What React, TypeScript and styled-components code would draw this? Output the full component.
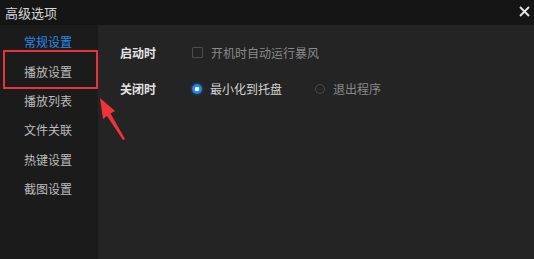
import React from "react";
import styled, { createGlobalStyle } from "styled-components";

const Global = createGlobalStyle`
  html, body { margin: 0; padding: 0; background: #242424; }
  body { font-family: "Noto Sans CJK SC", "Noto Sans", sans-serif; }
  #root { width: 534px; height: 259px; }
`;

const Window = styled.div`
  position: relative;
  width: 534px;
  height: 259px;
  display: flex;
  flex-direction: column;
  background: #242424;
  overflow: hidden;
`;

const TitleBar = styled.div`
  height: 25px;
  flex: none;
  display: flex;
  align-items: center;
  justify-content: space-between;
  padding: 0 4px 0 5px;
  background: #151515;
`;

const Title = styled.span`
  font-size: 13px;
  color: #d6d6d6;
  line-height: 1;
  margin-top: -1px;
`;

const Close = styled.svg`
  width: 11px;
  height: 11px;
  margin-top: -2px;
`;

const Body = styled.div`
  flex: 1;
  display: flex;
`;

const Sidebar = styled.div`
  width: 98px;
  flex: none;
  background: #1b1b1b;
  padding-top: 2px;
  display: flex;
  flex-direction: column;
`;

const NavItem = styled.div<{ $active?: boolean }>`
  height: 29.4px;
  display: flex;
  align-items: center;
  padding-left: 24px;
  font-size: 12px;
  color: ${(p) => (p.$active ? "#2a8ae8" : "#bdbdbd")};
`;

const Content = styled.div`
  flex: 1;
  padding: 19px 0 0 22px;
  display: flex;
  flex-direction: column;
  gap: 19px;
`;

const Row = styled.div`
  display: flex;
  align-items: center;
  height: 17px;
`;

const Label = styled.span`
  width: 72px;
  font-size: 12px;
  color: #e2e2e2;
  font-weight: 600;
`;

const Option = styled.label<{ $dim?: boolean; $gap?: number }>`
  display: flex;
  align-items: center;
  font-size: 12px;
  color: ${(p) => (p.$dim ? "#8a8a8a" : "#d4d4d4")};
  margin-right: ${(p) => p.$gap ?? 0}px;
`;

const Check = styled.span`
  width: 9px;
  height: 9px;
  border: 1px solid #4d4d4d;
  border-radius: 1px;
  margin-right: 8px;
`;

const Radio = styled.span<{ $on?: boolean }>`
  width: 10px;
  height: 10px;
  border-radius: 50%;
  box-sizing: border-box;
  margin-right: 8px;
  ${(p) =>
    p.$on
      ? `background: radial-gradient(circle, #ffffff 0 2px, #1f86ee 2.6px);
         box-shadow: 0 0 3px rgba(40,140,255,0.7);`
      : `border: 1px solid #4a4a4a;`}
`;

const Highlight = styled.div`
  position: absolute;
  left: 3px;
  top: 50px;
  width: 95px;
  height: 39px;
  box-sizing: border-box;
  border: 2px solid #e8333a;
`;

const Arrow = styled.svg`
  position: absolute;
  left: 94px;
  top: 94px;
  width: 36px;
  height: 50px;
`;

export default function App() {
  const nav = ["常规设置", "播放设置", "播放列表", "文件关联", "热键设置", "截图设置"];
  return (
    <>
      <Global />
      <Window>
        <TitleBar>
          <Title>高级选项</Title>
          <Close viewBox="0 0 11 11">
            <path d="M1 1 L10 10 M10 1 L1 10" stroke="#e6e6e6" strokeWidth="1.8" />
          </Close>
        </TitleBar>
        <Body>
          <Sidebar>
            {nav.map((n, i) => (
              <NavItem key={n} $active={i === 0}>
                {n}
              </NavItem>
            ))}
          </Sidebar>
          <Content>
            <Row>
              <Label>启动时</Label>
              <Option $dim>
                <Check />
                开机时自动运行暴风
              </Option>
            </Row>
            <Row>
              <Label>关闭时</Label>
              <Option $gap={33}>
                <Radio $on />
                最小化到托盘
              </Option>
              <Option $dim>
                <Radio />
                退出程序
              </Option>
            </Row>
          </Content>
        </Body>
        <Highlight />
        <Arrow viewBox="0 0 36 50">
          <path d="M6 4 L21 17 L16.5 19.5 L31 45 L29 46 L13 22 L9 25 Z" fill="#f0333a" />
        </Arrow>
      </Window>
    </>
  );
}
